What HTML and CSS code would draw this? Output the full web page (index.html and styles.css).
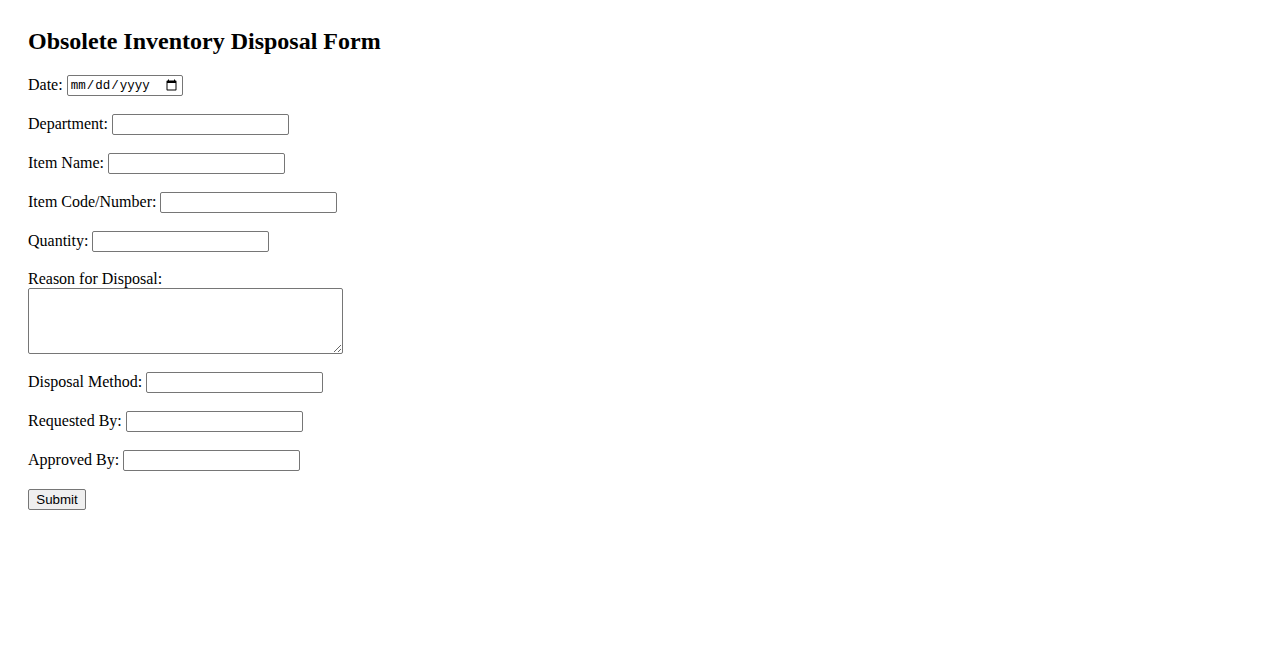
FILE: index.html
```html
<!DOCTYPE html>
<html lang="en">
<head>
<meta charset="utf-8">
<title>Obsolete Inventory Disposal Form</title>
<link rel="stylesheet" href="styles.css">
</head>
<body>
<div class="page">
  <h2 class="title">Obsolete Inventory Disposal Form</h2>
  <form class="form">
    <div class="row"><label class="label" for="date">Date:</label><input class="field date" type="date" id="date"></div>
    <div class="row"><label class="label" for="dept">Department:</label><input class="field" type="text" id="dept"></div>
    <div class="row"><label class="label" for="item">Item Name:</label><input class="field" type="text" id="item"></div>
    <div class="row"><label class="label" for="code">Item Code/Number:</label><input class="field" type="text" id="code"></div>
    <div class="row"><label class="label" for="qty">Quantity:</label><input class="field" type="text" id="qty"></div>
    <div class="block">
      <label class="block-label" for="reason">Reason for Disposal:</label>
      <textarea class="area" id="reason"></textarea>
    </div>
    <div class="row"><label class="label" for="method">Disposal Method:</label><input class="field" type="text" id="method"></div>
    <div class="row"><label class="label" for="req">Requested By:</label><input class="field" type="text" id="req"></div>
    <div class="row"><label class="label" for="appr">Approved By:</label><input class="field" type="text" id="appr"></div>
    <div class="row"><button class="submit" type="submit">Submit</button></div>
  </form>
</div>
</body>
</html>
```
FILE: styles.css
```css
html, body {
  margin: 0;
  padding: 0;
  background: #ffffff;
}
body {
  font-family: "Liberation Serif", "Times New Roman", serif;
  font-size: 16px;
  color: #000000;
}
.page {
  padding: 28px;
}
.title {
  margin: 0 0 20px 0;
  font-size: 24px;
  line-height: 27px;
  font-weight: bold;
}
.form {
  margin: 0;
}
.row {
  display: flex;
  align-items: flex-start;
  gap: 4px;
  height: 21px;
  margin-bottom: 18px;
}
.label {
  line-height: 20px;
}
.field {
  box-sizing: border-box;
  width: 177px;
  height: 21px;
  margin: 0;
  padding: 1px 2px;
  border: 1px solid #767676;
  border-radius: 2px;
  font-family: "Liberation Sans", Arial, sans-serif;
  font-size: 13.33px;
  background: #ffffff;
}
.date {
  width: 116px;
  font-family: "Liberation Mono", "Courier New", monospace;
  font-size: 12.5px;
}
.block {
  margin-bottom: 18px;
}
.block-label {
  display: block;
  height: 18px;
  line-height: 17px;
}
.area {
  display: block;
  box-sizing: border-box;
  width: 315px;
  height: 66px;
  margin: 0;
  border: 1px solid #767676;
  border-radius: 2px;
  padding: 2px;
  font-family: "Liberation Mono", monospace;
  font-size: 13.33px;
}
.submit {
  box-sizing: border-box;
  width: 58px;
  height: 21px;
  margin: 0;
  padding: 1px 6px;
  border: 1px solid #767676;
  border-radius: 2px;
  background: #efefef;
  font-family: "Liberation Sans", Arial, sans-serif;
  font-size: 13.33px;
  color: #000000;
}
```
